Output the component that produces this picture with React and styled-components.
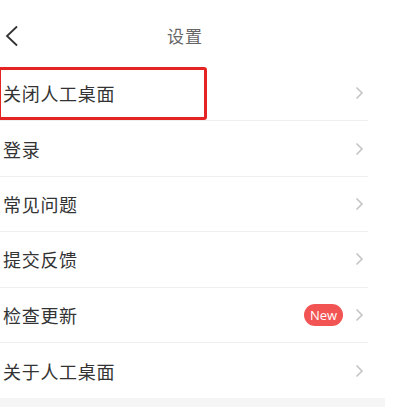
import styled, { createGlobalStyle } from "styled-components";

const GlobalStyle = createGlobalStyle`
  body {
    margin: 0;
    background: #ffffff;
    font-family: "Noto Sans CJK SC", "Noto Sans", sans-serif;
  }
`;

const Page = styled.div`
  width: 385px;
  display: flex;
  flex-direction: column;
`;

const Header = styled.div`
  width: 370px;
  height: 66px;
  display: grid;
  grid-template-columns: 40px 1fr 40px;
  align-items: center;
  padding-top: 5px;
  box-sizing: border-box;
`;

const BackButton = styled.div`
  display: flex;
  align-items: center;
  padding-left: 5px;
`;

const Title = styled.div`
  text-align: center;
  font-size: 17px;
  color: #666666;
  letter-spacing: 1px;
`;

const List = styled.div`
  width: 368px;
  display: flex;
  flex-direction: column;
`;

const Row = styled.div`
  position: relative;
  height: 55.4px;
  box-sizing: border-box;
  display: flex;
  align-items: center;
  padding-left: 3px;
  border-bottom: ${(p) => (p.$last ? "none" : "1px solid #efefef")};
`;

const Label = styled.div`
  flex: 1;
  font-size: 18px;
  color: #333333;
  letter-spacing: 0.7px;
`;

const Badge = styled.div`
  width: 39px;
  height: 22px;
  border-radius: 11px;
  background: #f25454;
  color: #ffffff;
  font-family: "Open Sans", "Noto Sans", sans-serif;
  font-size: 13px;
  display: flex;
  align-items: center;
  justify-content: center;
  margin-right: 12px;
`;

const Arrow = styled.div`
  width: 13px;
  display: flex;
  align-items: center;
`;

const Highlight = styled.div`
  position: absolute;
  left: -2px;
  top: 1px;
  width: 209px;
  height: 53px;
  box-sizing: border-box;
  border: 3px solid #e42323;
  border-radius: 3px;
  pointer-events: none;
`;

const Footer = styled.div`
  height: 9px;
  background: #f5f5f5;
`;

const Chevron = () => (
  <svg width="9" height="14" viewBox="0 0 9 14">
    <path d="M1.5 1.5 L7 7 L1.5 12.5" fill="none" stroke="#c4c4c4" strokeWidth="1.6" />
  </svg>
);

const items = [
  { label: "关闭人工桌面", marked: true },
  { label: "登录" },
  { label: "常见问题" },
  { label: "提交反馈" },
  { label: "检查更新", badge: "New" },
  { label: "关于人工桌面" },
];

function App() {
  return (
    <>
      <GlobalStyle />
      <Page>
        <Header>
          <BackButton>
            <svg width="14" height="22" viewBox="0 0 14 22">
              <path d="M12 1.5 L2 11 L12 20.5" fill="none" stroke="#333" strokeWidth="1.8" />
            </svg>
          </BackButton>
          <Title>设置</Title>
          <div />
        </Header>
        <List>
          {items.map((it, i) => (
            <Row key={it.label} $last={i === items.length - 1}>
              <Label>{it.label}</Label>
              {it.badge && <Badge>{it.badge}</Badge>}
              <Arrow>
                <Chevron />
              </Arrow>
              {it.marked && <Highlight />}
            </Row>
          ))}
        </List>
        <Footer />
      </Page>
    </>
  );
}

export default App;
